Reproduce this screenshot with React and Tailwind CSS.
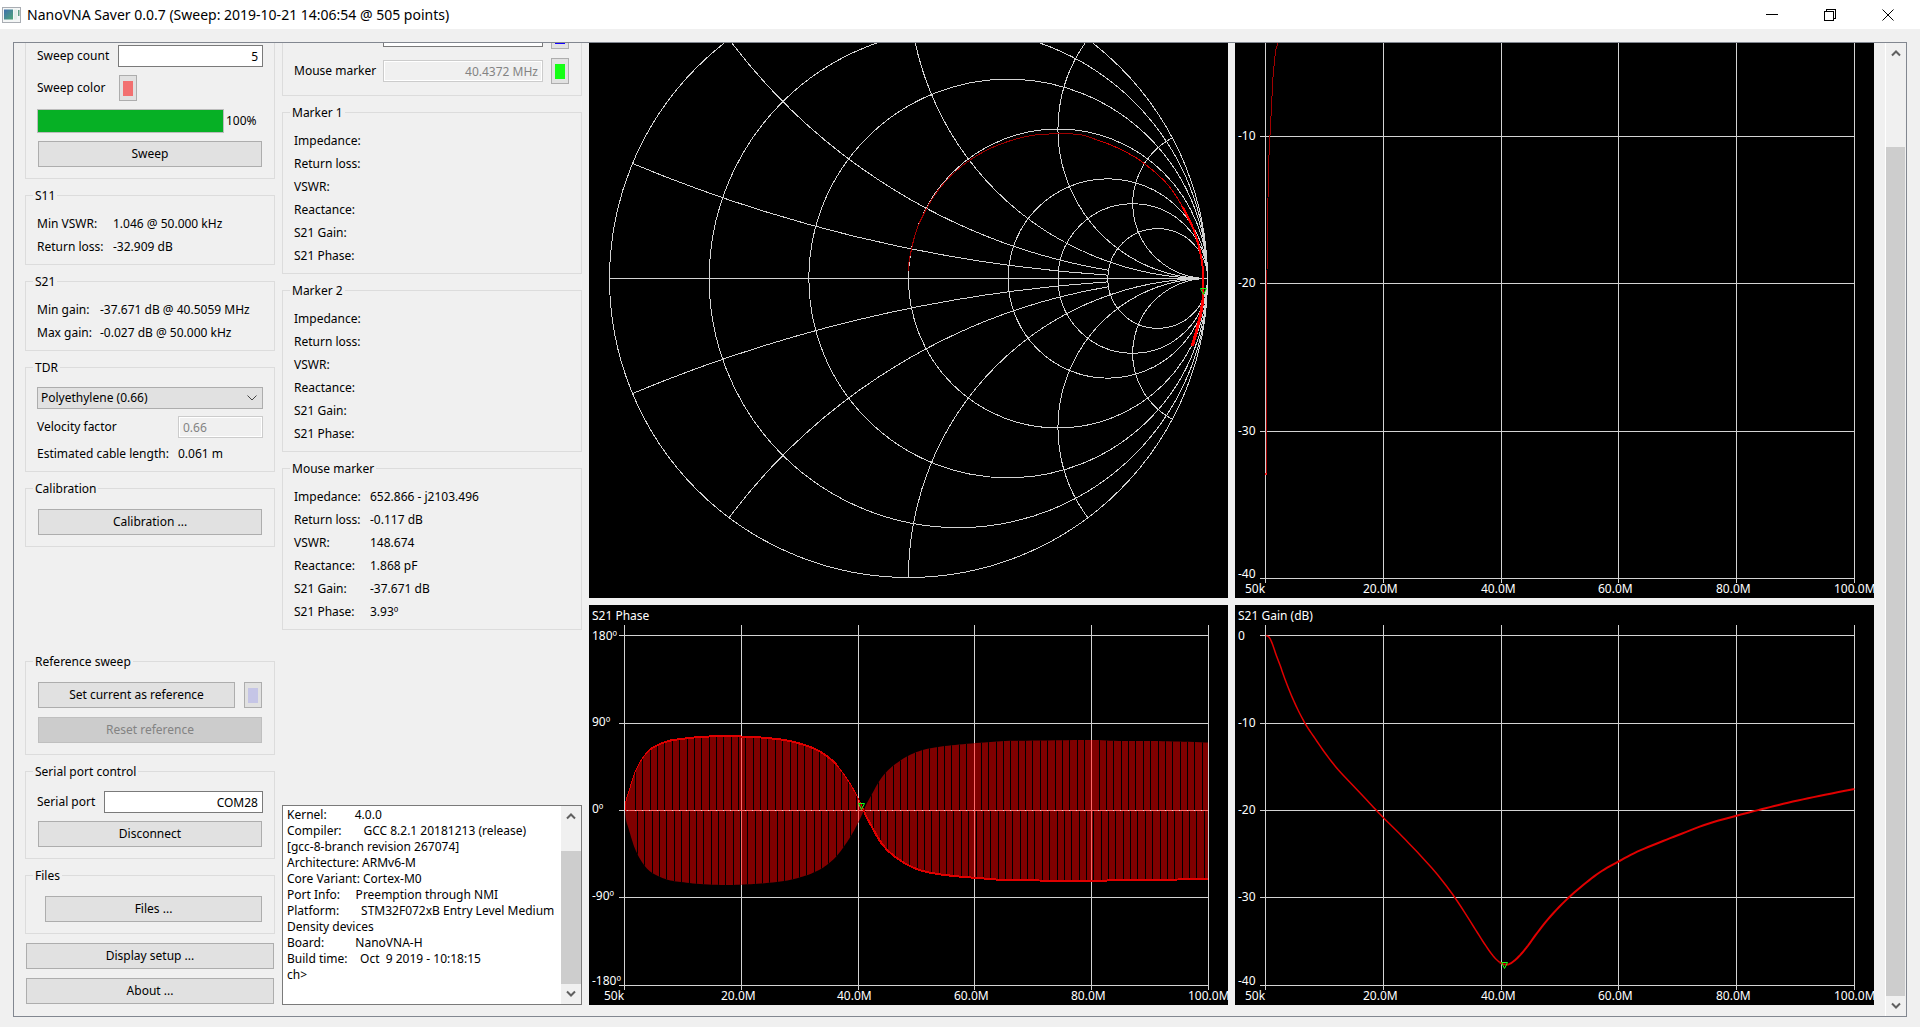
import React from "react";

const GRID = "#d3d3d3";
const RED = "#e00000";
const DARK_RED = "#800000";

/* ---------- small controls ---------- */

function Button({ children, className = "", ...rest }) {
  return (
    <button
      type="button"
      className={`h-[26px] border border-[#adadad] bg-[#e1e1e1] text-center leading-4 disabled:border-[#bfbfbf] disabled:bg-[#cccccc] disabled:text-[#838383] ${className}`}
      {...rest}
    >
      {children}
    </button>
  );
}

function ColorButton({ label, swatch, className = "" }) {
  return (
    <button
      type="button"
      aria-label={label}
      className={`flex h-[26px] w-[18px] shrink-0 items-center justify-center border border-[#adadad] bg-[#e1e1e1] ${className}`}
    >
      <span className={`h-[15px] w-[10px] ${swatch}`} />
    </button>
  );
}

const FIELD = "h-[22px] min-w-0 border border-[#7a7a7a] bg-white px-1 text-right leading-4";
const FIELD_OFF =
  "h-[22px] min-w-0 border border-[#cccccc] bg-[#f0f0f0] px-1 leading-4 text-[#838383] shadow-[inset_0_0_0_1px_#ffffff]";

function Group({ title, className = "", children }) {
  return (
    <fieldset className={`min-w-0 border border-[#dcdcdc] ${className}`}>
      <legend className="ml-[7px] h-[17px] px-[2px] leading-[17px]">{title}</legend>
      {children}
    </fieldset>
  );
}

function Readings({ rows, labelWidth }) {
  return (
    <dl className="px-[11px] pt-2 pb-[6px]">
      {rows.map(([name, value]) => (
        <div key={name} className="flex h-[23px] items-center">
          <dt className={`shrink-0 ${labelWidth}`}>{name}</dt>
          <dd className="whitespace-nowrap">{value}</dd>
        </div>
      ))}
    </dl>
  );
}

function ScrollArrow({ down }) {
  return (
    <button
      type="button"
      aria-label={down ? "Scroll down" : "Scroll up"}
      className="flex h-[20px] w-full shrink-0 items-center justify-center"
    >
      <svg width="10" height="8" viewBox="0 0 10 8" fill="none" stroke="#606060" strokeWidth="2">
        <path d={down ? "M1 1.5 L5 5.5 L9 1.5" : "M1 6.5 L5 2.5 L9 6.5"} />
      </svg>
    </button>
  );
}

/* ---------- title bar ---------- */

function TitleBar() {
  return (
    <header className="flex h-[29px] shrink-0 items-center bg-white pr-[3px] pl-[2px]">
      <svg width="19" height="16" viewBox="0 0 19 16" className="shrink-0">
        <defs>
          <linearGradient id="appicon" x1="0" y1="0" x2="1" y2="1">
            <stop offset="0" stopColor="#3f6fae" />
            <stop offset="1" stopColor="#4fa777" />
          </linearGradient>
        </defs>
        <rect x="0.5" y="0.5" width="18" height="15" fill="#f4f6f6" stroke="#a9adb3" />
        <rect x="2" y="2.5" width="9" height="10" fill="url(#appicon)" />
        <rect x="12" y="2.5" width="3" height="10" fill="#e2efe9" />
        <rect x="16" y="3" width="1.5" height="6" fill="#5f9f86" />
      </svg>
      <h1 className="ml-[6px] grow text-sm leading-5 whitespace-nowrap">
        NanoVNA Saver 0.0.7 (Sweep: 2019-10-21 14:06:54 @ 505 points)
      </h1>
      <button type="button" aria-label="Minimize" className="flex h-[29px] w-[58px] items-center justify-center">
        <svg width="12" height="12" viewBox="0 0 12 12" shapeRendering="crispEdges">
          <path d="M0 5.5 H12" stroke="#000" />
        </svg>
      </button>
      <button type="button" aria-label="Restore" className="flex h-[29px] w-[58px] items-center justify-center">
        <svg width="12" height="12" viewBox="0 0 12 12" fill="none" stroke="#000" shapeRendering="crispEdges">
          <path d="M0.5 2.5 H9.5 V11.5 H0.5 Z M2.5 2.5 V0.5 H11.5 V9.5 H9.5" />
        </svg>
      </button>
      <button type="button" aria-label="Close" className="flex h-[29px] w-[58px] items-center justify-center">
        <svg width="12" height="12" viewBox="0 0 12 12" stroke="#000">
          <path d="M0.5 0.5 L11.5 11.5 M11.5 0.5 L0.5 11.5" />
        </svg>
      </button>
    </header>
  );
}

/* ---------- control columns ---------- */

function SweepColumn() {
  return (
    <div className="flex w-[250px] shrink-0 flex-col">
      <section className="flex flex-col gap-2 border border-t-0 border-[#dcdcdc] px-[11px] pt-[2px] pb-[11px]">
        <div className="flex items-center">
          <label htmlFor="count" className="w-[81px] shrink-0 whitespace-nowrap">Sweep count</label>
          <input id="count" defaultValue="5" className={`w-0 grow ${FIELD}`} />
        </div>
        <div className="flex items-center">
          <span className="w-[82px]">Sweep color</span>
          <ColorButton label="Sweep color" swatch="bg-[#f27070]" />
        </div>
        <div className="flex items-center gap-[2px]">
          <div
            role="progressbar"
            aria-label="Sweep progress"
            aria-valuenow={100}
            className="h-[24px] w-[187px] border border-[#bcbcbc] bg-[#06b025]"
          />
          <span>100%</span>
        </div>
        <Button className="mx-px">Sweep</Button>
      </section>

      <Group title="S11" className="mt-2">
        <Readings
          labelWidth="w-[76px]"
          rows={[["Min VSWR:", "1.046 @ 50.000 kHz"], ["Return loss:", "-32.909 dB"]]}
        />
      </Group>

      <Group title="S21" className="mt-2">
        <Readings
          labelWidth="w-[63px]"
          rows={[["Min gain:", "-37.671 dB @ 40.5059 MHz"], ["Max gain:", "-0.027 dB @ 50.000 kHz"]]}
        />
      </Group>

      <Group title="TDR" className="mt-2">
        <div className="flex flex-col px-[11px] pt-[11px] pb-[9px]">
          <div className="grid">
            <select
              aria-label="Cable type"
              className="col-start-1 row-start-1 h-[22px] appearance-none border border-[#adadad] bg-[#e1e1e1] px-[3px] leading-4"
            >
              <option>Polyethylene (0.66)</option>
            </select>
            <svg
              width="10"
              height="6"
              viewBox="0 0 10 6"
              fill="none"
              stroke="#444"
              className="pointer-events-none col-start-1 row-start-1 mr-[6px] self-center justify-self-end"
            >
              <path d="M0.5 0.5 L5 5 L9.5 0.5" />
            </svg>
          </div>
          <div className="mt-[7px] flex items-center">
            <label htmlFor="velocity" className="w-[141px]">Velocity factor</label>
            <input id="velocity" disabled defaultValue="0.66" className={`w-0 grow ${FIELD_OFF}`} />
          </div>
          <div className="mt-2 flex h-4 items-center">
            <span className="w-[141px]">Estimated cable length:</span>
            <span>0.061 m</span>
          </div>
        </div>
      </Group>

      <Group title="Calibration" className="mt-2">
        <div className="flex flex-col px-3 pt-3 pb-[11px]">
          <Button>Calibration ...</Button>
        </div>
      </Group>

      <div className="grow" />

      <Group title="Reference sweep">
        <div className="flex flex-col gap-[9px] px-3 pt-3 pb-[11px]">
          <div className="flex gap-[9px]">
            <Button className="grow">Set current as reference</Button>
            <ColorButton label="Reference color" swatch="bg-[#c5c5e6]" />
          </div>
          <Button disabled>Reset reference</Button>
        </div>
      </Group>

      <Group title="Serial port control" className="mt-2">
        <div className="flex flex-col gap-2 px-[11px] py-[11px]">
          <div className="flex items-center">
            <label htmlFor="port" className="w-[67px]">Serial port</label>
            <input id="port" defaultValue="COM28" className={`w-0 grow ${FIELD}`} />
          </div>
          <Button className="mx-px">Disconnect</Button>
        </div>
      </Group>

      <Group title="Files" className="mt-2">
        <div className="flex flex-col pt-3 pr-3 pb-[11px] pl-[19px]">
          <Button>Files ...</Button>
        </div>
      </Group>

      <Button className="mx-px mt-[9px] shrink-0">Display setup ...</Button>
      <Button className="mx-px mt-[9px] mb-px shrink-0">About ...</Button>
    </div>
  );
}

const MARKER_ROWS = ["Impedance:", "Return loss:", "VSWR:", "Reactance:", "S21 Gain:", "S21 Phase:"];
const MOUSE_VALUES = ["652.866 - j2103.496", "-0.117 dB", "148.674", "1.868 pF", "-37.671 dB", "3.93º"];

const CONSOLE_TEXT = [
  "Kernel:         4.0.0",
  "Compiler:       GCC 8.2.1 20181213 (release)",
  "[gcc-8-branch revision 267074]",
  "Architecture: ARMv6-M",
  "Core Variant: Cortex-M0",
  "Port Info:     Preemption through NMI",
  "Platform:       STM32F072xB Entry Level Medium Density devices",
  "Board:          NanoVNA-H",
  "Build time:    Oct  9 2019 - 10:18:15",
  "ch>",
].join("\n");

function MarkerColumn() {
  return (
    <div className="flex w-[300px] shrink-0 flex-col">
      <section className="flex h-[53px] shrink-0 flex-col justify-end gap-[9px] overflow-hidden border border-t-0 border-[#dcdcdc] pr-3 pb-[11px] pl-[11px]">
        <div className="flex shrink-0 items-center">
          <input aria-label="Marker 2" className={`ml-[89px] w-[160px] ${FIELD}`} />
          <ColorButton label="Marker 2 color" swatch="bg-[#1400ff]" className="ml-auto" />
        </div>
        <div className="flex shrink-0 items-center">
          <label htmlFor="mouse" className="w-[89px]">Mouse marker</label>
          <input id="mouse" disabled defaultValue="40.4372 MHz" className={`w-[160px] text-right ${FIELD_OFF}`} />
          <ColorButton label="Mouse marker color" swatch="bg-[#14ff14]" className="ml-auto" />
        </div>
      </section>

      <Group title="Marker 1" className="mt-2">
        <Readings labelWidth="w-[76px]" rows={MARKER_ROWS.map((name) => [name, ""])} />
      </Group>
      <Group title="Marker 2" className="mt-2">
        <Readings labelWidth="w-[76px]" rows={MARKER_ROWS.map((name) => [name, ""])} />
      </Group>
      <Group title="Mouse marker" className="mt-2">
        <Readings labelWidth="w-[76px]" rows={MARKER_ROWS.map((name, i) => [name, MOUSE_VALUES[i]])} />
      </Group>

      <div className="grow" />

      <div className="flex h-[200px] shrink-0 border border-[#7a7a7a] bg-white">
        <textarea
          readOnly
          aria-label="Device console"
          value={CONSOLE_TEXT}
          className="min-w-0 grow resize-none overflow-hidden pt-px pl-1 leading-4"
        />
        <div className="flex w-[20px] shrink-0 flex-col bg-[#f0f0f0]">
          <ScrollArrow />
          <div className="mt-[25px] grow bg-[#cdcdcd]" />
          <ScrollArrow down />
        </div>
      </div>
    </div>
  );
}

/* ---------- charts ---------- */

function Chart({ height, label, children }) {
  return (
    <div className="min-w-0 overflow-hidden bg-black">
      <svg
        role="img"
        aria-label={label}
        className="block h-full w-full"
        viewBox={`0 0 639 ${height}`}
        fill="none"
        fontSize="12"
      >
        {children}
      </svg>
    </div>
  );
}

function Axes({ xs, ys, top, bottom }) {
  return (
    <g stroke={GRID} shapeRendering="crispEdges">
      {xs.map((x) => (
        <path key={x} d={`M${x + 0.5} ${top} V${bottom}`} />
      ))}
      {ys.map((y) => (
        <path key={y} d={`M${xs[0] - 5} ${y + 0.5} H${xs[xs.length - 1] + 1}`} />
      ))}
    </g>
  );
}

const FREQS = ["50k", "20.0M", "40.0M", "60.0M", "80.0M", "100.0M"];

function Labels({ items }) {
  return (
    <g fill="#ffffff">
      {items.map(([x, y, text]) => (
        <text key={text} x={x} y={y}>{text}</text>
      ))}
    </g>
  );
}

function MarkerGlyph({ x, y }) {
  return <path d={`M${x - 3} ${y} H${x + 3} L${x} ${y + 6} Z`} stroke="#14ff14" />;
}

const toPoints = (list) => list.map(([x, y]) => `${x},${y}`).join(" ");

// Catmull-Rom interpolation, so that sparse samples give an even curve.
function smooth(list, steps = 6) {
  const out = [];
  for (let i = 0; i < list.length - 1; i++) {
    const p0 = list[Math.max(i - 1, 0)];
    const p1 = list[i];
    const p2 = list[i + 1];
    const p3 = list[Math.min(i + 2, list.length - 1)];
    for (let s = 0; s < steps; s++) {
      const t = s / steps;
      out.push(
        [0, 1].map(
          (k) =>
            0.5 *
            (2 * p1[k] +
              (p2[k] - p0[k]) * t +
              (2 * p0[k] - 5 * p1[k] + 4 * p2[k] - p3[k]) * t * t +
              (3 * p1[k] - p0[k] - 3 * p2[k] + p3[k]) * t * t * t)
        )
      );
    }
  }
  out.push(list[list.length - 1]);
  return out;
}

const SMITH = { cx: 319.5, cy: 235.5, r: 299 };

const S11_TRACE = smooth([
  [319.3, 228], [320, 219], [322.7, 205.3], [326, 192], [331, 178.6], [342.4, 157.2], [356.3, 138.7],
  [371.9, 123.9], [390.8, 110.9], [411.9, 101], [437, 93.5], [460, 91], [490, 91.5],
  [508.7, 97.2], [525.5, 103.5], [542.3, 112], [552.7, 118.7], [568, 131], [581.5, 145],
  [593, 163], [602.7, 182], [607.5, 195], [611, 208.7], [613, 219], [614, 230], [614.3, 243],
  [613.7, 257], [612.3, 267], [610.3, 277], [607, 290], [603.3, 303],
]);

function SmithChart() {
  const { cx, cy, r } = SMITH;
  const right = cx + r;
  const resistance = [0, 0.2, 0.5, 1, 2, 3, 5];
  const reactance = [0.2, 0.5, 1, 2, 4];
  // Reflection coefficient of z = R + jX, mapped to chart coordinates.
  const at = (R, X) => {
    const d = (R + 1) * (R + 1) + X * X;
    return [cx + ((R * R - 1 + X * X) / d) * r, ((2 * X) / d) * r];
  };
  return (
    <Chart height={555} label="S11 Smith chart">
      <g stroke={GRID} shapeRendering="crispEdges">
        {resistance.map((R) => {
          const radius = r / (1 + R);
          return <circle key={R} cx={right - radius} cy={cy} r={radius} />;
        })}
        <path d={`M${cx - r} ${cy} H${right}`} />
        {reactance.map((X) => {
          const [x0, y0] = at(0, X);
          const [x1, y1] = X < 1 ? at(5, X) : [right, 0];
          const radius = r / X;
          return (
            <React.Fragment key={X}>
              <path d={`M${x0} ${cy - y0} A${radius} ${radius} 0 0 0 ${x1} ${cy - y1}`} />
              <path d={`M${x0} ${cy + y0} A${radius} ${radius} 0 0 1 ${x1} ${cy + y1}`} />
            </React.Fragment>
          );
        })}
      </g>
      <g shapeRendering="crispEdges">
        <polyline points={toPoints(S11_TRACE.slice(0, 79))} stroke="#a00000" />
        <polyline points={toPoints(S11_TRACE.slice(78, 115))} stroke="#d00000" />
        <polyline points={toPoints(S11_TRACE.slice(114))} stroke="#ff0000" strokeWidth="2" />
        <polyline points={toPoints(S11_TRACE.slice(156))} stroke="#ff0000" strokeWidth="3" />
      </g>
      <MarkerGlyph x={614.5} y={245.5} />
    </Chart>
  );
}

function ReturnLossChart() {
  const trace = [
    [43, 0], [40.5, 8], [39.7, 16], [38.5, 28], [37.5, 41], [36.8, 58], [35.5, 82], [34, 112],
    [33, 155], [32, 228], [31.5, 300], [31.5, 431],
  ];
  const xs = [30, 148, 266, 383, 501, 619];
  return (
    <Chart height={555} label="S11 return loss">
      <Axes xs={xs} ys={[93, 240, 388, 535]} top={0} bottom={540} />
      <polyline points={toPoints(trace)} stroke="#a00000" shapeRendering="crispEdges" />
      <rect x="30" y="430" width="2" height="2" fill="#ff2020" />
      <Labels
        items={[
          [3, 97, "-10"], [3, 244, "-20"], [3, 392, "-30"], [3, 535, "-40"],
          ...FREQS.map((f, i) => [[10, 128, 246, 363, 481, 599][i], 550, f]),
        ]}
      />
    </Chart>
  );
}

const PHASE_LEFT = smooth([
  [36, 206], [37, 196], [39.4, 188], [45.7, 168], [52.9, 154], [60.5, 145], [69, 140], [79.5, 136],
  [92, 134], [111, 132], [136, 131], [152, 131.5], [172, 132.5], [195, 135], [214, 139.5],
  [229, 145.5], [239, 152], [247.7, 160], [256, 171], [262.5, 181], [269, 193], [275, 205.5],
]);
const PHASE_RIGHT = smooth([
  [275, 205.5], [277, 211], [282.7, 221.5], [290, 234.5], [296, 242.5], [304.5, 250.5],
  [317, 259], [332, 265.5], [349, 269], [370, 271.5], [395, 273.5], [416, 275], [450, 275.5],
  [502, 276], [530, 275], [559, 275], [589, 274.5], [619, 273.5],
]);

function PhaseChart() {
  const mirror = (list) => list.map(([x, y]) => [x, 411 - y]);
  const left = toPoints([...PHASE_LEFT, ...mirror(PHASE_LEFT).reverse()]);
  const right = toPoints([...PHASE_RIGHT, ...mirror(PHASE_RIGHT).reverse()]);
  const gaps = Array.from({ length: 79 }, (_, k) => Math.round(46 + k * 7.36) + 0.5).filter((x) => x < 619);
  const xs = [35, 152, 269, 385, 502, 619];
  return (
    <Chart height={400} label="S21 phase">
      <defs>
        <clipPath id="phase-area">
          <polygon points={left} />
          <polygon points={right} />
        </clipPath>
      </defs>
      <Axes xs={xs} ys={[30, 118, 205, 292, 380]} top={20} bottom={385} />
      <g clipPath="url(#phase-area)" shapeRendering="crispEdges">
        <rect x="36" y="125" width="583" height="160" fill={DARK_RED} />
        <g stroke="#000000">
          {gaps.map((x) => (
            <path key={x} d={`M${x} 120 V205 M${x + 2} 206 V290`} />
          ))}
        </g>
        <path d="M36 205.5 H619" stroke={GRID} />
        <path d="M36 205.5 H619" stroke="#ff6a6a" strokeDasharray="6.36 1" strokeDashoffset="4" />
        {xs.slice(1, 5).map((x) => (
          <path key={x} d={`M${x + 0.5} 120 V290`} stroke="#ff6a6a" />
        ))}
      </g>
      <g stroke={RED} shapeRendering="crispEdges">
        <polyline points={toPoints(PHASE_LEFT.slice(0, 31))} />
        <polyline points={toPoints(PHASE_LEFT.slice(30, 103))} strokeWidth="2" />
        <polyline points={toPoints(PHASE_LEFT.slice(102))} />
        <polyline points={toPoints(PHASE_RIGHT)} strokeWidth="2" />
      </g>
      <MarkerGlyph x={272.5} y={198.5} />
      <Labels
        items={[
          [3, 15, "S21 Phase"],
          [3, 35, "180º"], [3, 121, "90º"], [3, 208, "0º"], [3, 295, "-90º"], [3, 380, "-180º"],
          ...FREQS.map((f, i) => [[15, 132, 248, 365, 482, 599][i], 395, f]),
        ]}
      />
    </Chart>
  );
}

const GAIN_TRACE = smooth([
  [31, 30.5], [34.3, 32.5], [37.4, 39], [41, 49.5], [45, 60], [49, 71.5], [55.2, 87.5], [62.3, 103.5],
  [70.7, 119.5], [78.7, 131.5], [89.7, 147.5], [103, 164.5], [118.5, 181], [134, 197.5], [148.2, 212.5],
  [167.3, 231.5], [185, 250], [202.8, 270], [220.5, 293.5], [238.2, 321], [249.3, 338.5], [258.2, 351],
  [264.8, 357.3], [270.1, 359.5], [275, 358.7], [282.6, 352.7], [291.4, 342.7], [302.5, 327.5],
  [315.8, 311], [333.5, 292.7], [351.3, 277.5], [366.8, 266], [383.6, 256.5], [402.2, 246.7],
  [424.4, 237.5], [446.6, 228.7], [473.2, 218.7], [501.5, 210.7], [526.3, 204.3], [553, 197.7],
  [584, 191], [619.4, 184],
]);

function GainChart() {
  const xs = [30, 148, 266, 383, 501, 619];
  return (
    <Chart height={400} label="S21 gain">
      <Axes xs={xs} ys={[30, 118, 205, 292, 380]} top={20} bottom={385} />
      <g stroke={RED}>
        <polyline points={toPoints(GAIN_TRACE.slice(0, 133))} strokeWidth="1.5" />
        <polyline points={toPoints(GAIN_TRACE.slice(132))} strokeWidth="2" />
      </g>
      <MarkerGlyph x={269.5} y={357.5} />
      <Labels
        items={[
          [3, 15, "S21 Gain (dB)"],
          [3, 35, "0"], [3, 122, "-10"], [3, 209, "-20"], [3, 296, "-30"], [3, 380, "-40"],
          ...FREQS.map((f, i) => [[10, 128, 246, 363, 481, 599][i], 395, f]),
        ]}
      />
    </Chart>
  );
}

/* ---------- window ---------- */

export default function App() {
  return (
    <div className="flex h-screen flex-col overflow-hidden bg-[#f0f0f0] font-['Noto_Sans',sans-serif] text-xs leading-4 text-black">
      <TitleBar />
      <main className="mx-[13px] mt-[13px] mb-[10px] flex min-h-0 grow overflow-hidden border border-[#828790]">
        <div className="flex min-w-0 grow gap-[7px] px-[11px] pb-[11px]">
          <SweepColumn />
          <MarkerColumn />
          <div className="grid min-w-0 grow grid-cols-2 grid-rows-[minmax(0,555fr)_minmax(0,400fr)] gap-[7px]">
            <SmithChart />
            <ReturnLossChart />
            <PhaseChart />
            <GainChart />
          </div>
        </div>
        <div className="flex w-[21px] shrink-0 flex-col border-l border-white bg-[#f0f0f0]">
          <ScrollArrow />
          <div className="mt-[84px] mr-px grow bg-[#cdcdcd]" />
          <ScrollArrow down />
        </div>
      </main>
    </div>
  );
}
